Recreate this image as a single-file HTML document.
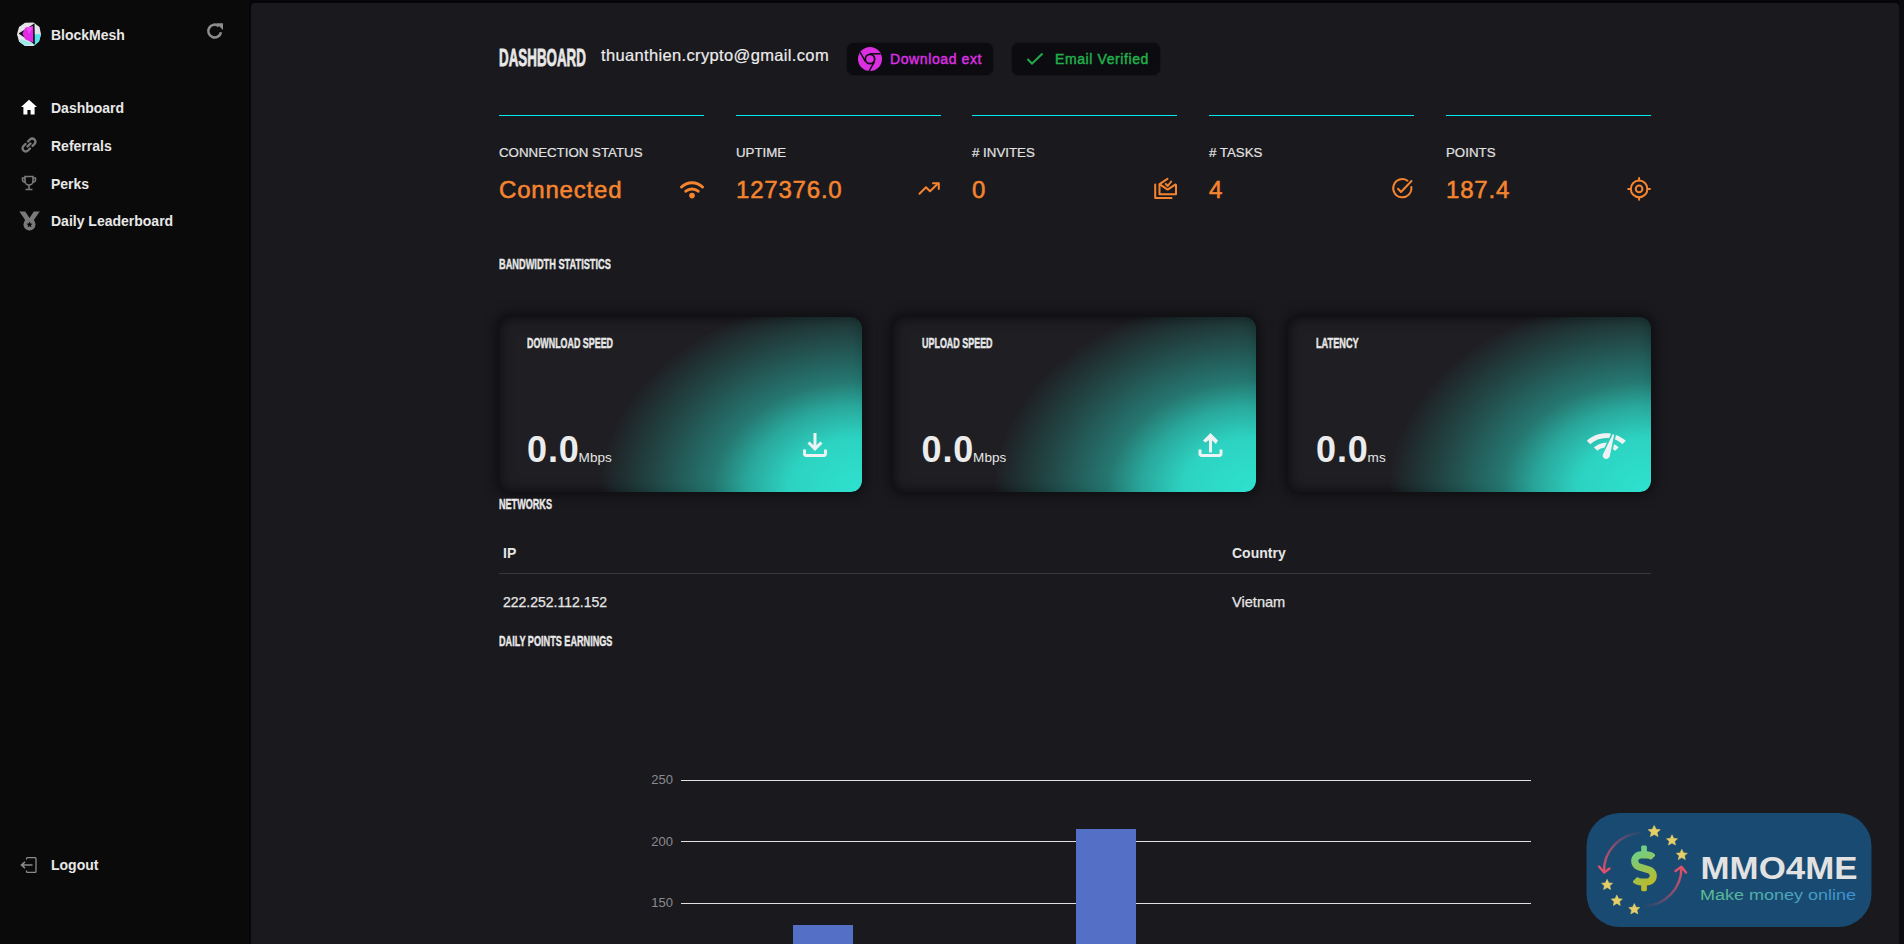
<!DOCTYPE html>
<html><head><meta charset="utf-8">
<style>
*{margin:0;padding:0;box-sizing:border-box}
html,body{width:1904px;height:944px;overflow:hidden}
body{background:#06050a;font-family:"Liberation Sans",sans-serif;position:relative;color:#e6e6e6}
.abs{position:absolute}
#side{left:0;top:0;width:249px;height:944px;background:#0a0a0a}
#main{left:251px;top:3px;width:1648px;height:960px;background:#1a191e;border-top-left-radius:4px;border-top-right-radius:4px}
#rstrip{left:1899px;top:0;width:5px;height:944px;background:#0b0a0f}
.nav{font-weight:bold;font-size:14px;color:#e8e8e8;white-space:nowrap}
.cond{font-weight:bold;white-space:nowrap;transform-origin:0 0;color:#e8e8e8;line-height:1;-webkit-text-stroke:0.45px #e8e8e8}
.cline{height:2px;background:#00e8f2;width:205px}
.lbl{font-size:13.3px;color:#e2e2e2;white-space:nowrap;-webkit-text-stroke:0.2px #e2e2e2}
.val{font-size:24px;font-weight:normal;color:#f5842f;white-space:nowrap;letter-spacing:0.8px;-webkit-text-stroke:0.55px #f5842f}
.card{width:363px;height:175px;border-radius:11px;overflow:hidden;background:#1f1f23;
 box-shadow:0 0 12px 3px rgba(0,0,0,0.5), inset 0 0 12px 2px rgba(0,0,0,0.5)}
.card::after{content:"";position:absolute;left:0;top:0;right:0;bottom:0;border-radius:11px;
 background:radial-gradient(ellipse 262px 196px at 100% 100%, rgba(46,226,207,1) 0%, rgba(46,226,207,0.92) 28%, rgba(46,226,207,0.7) 44%, rgba(46,226,207,0.45) 57%, rgba(46,226,207,0.2) 80%, rgba(46,226,207,0) 100%)}
.big{font-size:36px;font-weight:bold;color:#ececec;white-space:nowrap;letter-spacing:0.9px}
.unit{font-size:13.5px;font-weight:normal;color:#e6e6e6;letter-spacing:0.1px;margin-left:-1.2px}
</style></head><body>
<div id="side" class="abs"></div>
<div id="main" class="abs"></div>
<div id="rstrip" class="abs"></div>

<!-- sidebar -->
<svg class="abs" style="left:17px;top:22px" width="24" height="25" viewBox="0 0 24 25">
 <path d="M8 0.8 L16.5 0.6 L22.5 5 L24 12.2 L22 19.5 L16.5 24 L8 24 L2 19.5 L0 12.2 L2 5 Z" fill="#e4e4ea"/>
 <path d="M16.5 12.2 L24 12.2 L22 19.5 L16.5 24 Z" fill="#55e3ea"/>
 <path d="M4 17 L16.5 21.8 L8 24 L2 19.5 Z" fill="#9fe9ee"/>
 <path d="M1.6 11.6 L17 1.8 L17 22 Z" fill="#0c0c0c"/>
 <path d="M5.4 11.6 L8.6 5.4 L16.3 4.2 L16.3 20.6 L8.4 17.6 Z" fill="#e02ae6"/>
 <path d="M8.6 5.4 L16.3 4.2 L12.5 12 Z" fill="#f04af5"/>
 <path d="M16.9 1.8 L17.3 22.2" stroke="#0c0c0c" stroke-width="1.2"/>
</svg>
<div class="abs nav" style="left:51px;top:26.5px;">BlockMesh</div>
<svg class="abs" style="left:206px;top:22px" width="18" height="18" viewBox="0 0 18 18">
 <path d="M15 10.3 A6.4 6.4 0 1 1 12.9 4.2" fill="none" stroke="#8c8c8c" stroke-width="2.6"/>
 <path d="M10.3 1.2 L17 1.2 L17 7.9 Z" fill="#8c8c8c"/>
</svg>

<svg class="abs" style="left:21px;top:99px" width="16" height="16" viewBox="0 0 16 16">
 <path d="M8 0.8 L16 8 L13.6 8 L13.6 15.5 L9.6 15.5 L9.6 11 L6.4 11 L6.4 15.5 L2.4 15.5 L2.4 8 L0 8 Z" fill="#ffffff"/>
</svg>
<div class="abs nav" style="left:51px;top:99.5px;">Dashboard</div>
<svg class="abs" style="left:21px;top:137px" width="16" height="16" viewBox="0 0 16 16">
 <path d="M6.5 9.5 L9.5 6.5 M7 4.5 L9 2.5 A2.8 2.8 0 0 1 13.5 7 L11.5 9 M9 11.5 L7 13.5 A2.8 2.8 0 0 1 2.5 9 L4.5 7" fill="none" stroke="#7a7a7a" stroke-width="2.4" stroke-linecap="round"/>
</svg>
<div class="abs nav" style="left:51px;top:137.5px;">Referrals</div>
<svg class="abs" style="left:21px;top:175px" width="16" height="16" viewBox="0 0 16 16">
 <path d="M4 1.5 H12 V6 A4 4 0 0 1 4 6 Z M4 3 H1.5 V4.5 A2.5 2.5 0 0 0 4.3 7.2 M12 3 H14.5 V4.5 A2.5 2.5 0 0 1 11.7 7.2 M8 10 V13.8 M4.5 14.5 H11.5" fill="none" stroke="#7a7a7a" stroke-width="1.6"/>
</svg>
<div class="abs nav" style="left:51px;top:176px;">Perks</div>
<svg class="abs" style="left:19px;top:211px" width="21" height="20" viewBox="0 0 21 20">
 <path d="M0.3 0.5 H6.2 L10.5 7 L14.8 0.5 H20.7 L14.5 9.5 H6.5 Z" fill="#7a7a7a"/>
 <circle cx="10.5" cy="13.6" r="6" fill="#7a7a7a"/>
 <path d="M10.5 10.6 L11.4 12.6 L13.5 12.8 L11.9 14.2 L12.4 16.3 L10.5 15.2 L8.6 16.3 L9.1 14.2 L7.5 12.8 L9.6 12.6 Z" fill="#0a0a0a"/>
</svg>
<div class="abs nav" style="left:51px;top:213px;">Daily Leaderboard</div>

<svg class="abs" style="left:20px;top:857px" width="17" height="16" viewBox="0 0 17 16">
 <path d="M6.5 2.5 V1.8 A1.3 1.3 0 0 1 7.8 0.5 H14.7 A1.3 1.3 0 0 1 16 1.8 V14.2 A1.3 1.3 0 0 1 14.7 15.5 H7.8 A1.3 1.3 0 0 1 6.5 14.2 V13.5" fill="none" stroke="#8a8a8a" stroke-width="1.3"/>
 <path d="M12.5 8 H2 M5 4.8 L1.5 8 L5 11.2" fill="none" stroke="#8a8a8a" stroke-width="1.6"/>
</svg>
<div class="abs nav" style="left:51px;top:857px;">Logout</div>

<!-- header -->
<div class="abs cond" style="left:499px;top:46px;font-size:24px;transform:scaleX(0.557);-webkit-text-stroke:0.8px #e8e8e8">DASHBOARD</div>
<div class="abs" style="left:601px;top:47px;font-size:16.5px;line-height:1;letter-spacing:0.35px;color:#ececec;white-space:nowrap;-webkit-text-stroke:0.2px #ececec">thuanthien.crypto@gmail.com</div>
<div class="abs" style="left:847px;top:43px;width:146px;height:32px;background:#0c0b10;border-radius:7px;box-shadow:0 0 2px rgba(0,0,0,0.6)"></div>
<svg class="abs" style="left:858px;top:47px" width="24" height="24" viewBox="0 0 24 24">
 <circle cx="12" cy="12" r="12" fill="#dc2fe2"/>
 <circle cx="12" cy="12" r="5.5" fill="#0c0b10"/>
 <circle cx="12" cy="12" r="3.8" fill="#de2fe6"/>
 <path d="M12 6.8 L22.6 6.8" stroke="#0c0b10" stroke-width="1.5"/>
 <path d="M7.5 14.6 L2.2 5.4" stroke="#0c0b10" stroke-width="1.5"/>
 <path d="M16.5 14.6 L11.2 23.8" stroke="#0c0b10" stroke-width="1.5"/>
</svg>
<div class="abs" style="left:890px;top:51.5px;font-size:14px;line-height:1;font-weight:normal;color:#dc2fe2;white-space:nowrap;letter-spacing:0.6px;-webkit-text-stroke:0.45px #dc2fe2">Download ext</div>
<div class="abs" style="left:1012px;top:43px;width:148px;height:32px;background:#0c0b10;border-radius:7px;box-shadow:0 0 2px rgba(0,0,0,0.6)"></div>
<svg class="abs" style="left:1026px;top:52px" width="18" height="14" viewBox="0 0 18 14">
 <path d="M1.5 7 L6 11.6 L16.5 1.5" fill="none" stroke="#22b04b" stroke-width="2"/>
</svg>
<div class="abs" style="left:1055px;top:51.5px;font-size:14px;line-height:1;font-weight:normal;color:#22b04b;white-space:nowrap;letter-spacing:0.6px;-webkit-text-stroke:0.45px #22b04b">Email Verified</div>

<!-- stats -->
<div class="abs cline" style="left:499px;top:115px;height:1px"></div>
<div class="abs cline" style="left:736px;top:115px;height:1px"></div>
<div class="abs cline" style="left:972px;top:115px;height:1px"></div>
<div class="abs cline" style="left:1209px;top:115px;height:1px"></div>
<div class="abs cline" style="left:1446px;top:115px;height:1px"></div>

<div class="abs lbl" style="left:499px;top:145.7px;line-height:1">CONNECTION STATUS</div>
<div class="abs lbl" style="left:736px;top:145.7px;line-height:1">UPTIME</div>
<div class="abs lbl" style="left:972px;top:145.7px;line-height:1"># INVITES</div>
<div class="abs lbl" style="left:1209px;top:145.7px;line-height:1"># TASKS</div>
<div class="abs lbl" style="left:1446px;top:145.7px;line-height:1">POINTS</div>

<div class="abs val" style="left:499px;top:177.7px;line-height:1">Connected</div>
<div class="abs val" style="left:736px;top:177.7px;line-height:1">127376.0</div>
<div class="abs val" style="left:972px;top:177.7px;line-height:1">0</div>
<div class="abs val" style="left:1209px;top:177.7px;line-height:1">4</div>
<div class="abs val" style="left:1446px;top:177.7px;line-height:1">187.4</div>

<svg class="abs" style="left:678px;top:178px" width="28" height="22" viewBox="678 178 28 22">
 <path d="M681.5 187 A15 15 0 0 1 702.5 187" fill="none" stroke="#f5842f" stroke-width="3" stroke-linecap="round"/>
 <path d="M685.8 191.2 A9.7 9.7 0 0 1 698.2 191.2" fill="none" stroke="#f5842f" stroke-width="3" stroke-linecap="round"/>
 <circle cx="692" cy="195.6" r="2.8" fill="#f5842f"/>
</svg>
<svg class="abs" style="left:915px;top:179px" width="28" height="20" viewBox="915 179 28 20">
 <path d="M919.5 193.8 L926 187.3 L930 191.3 L938 183.5" fill="none" stroke="#f5842f" stroke-width="2" stroke-linecap="round" stroke-linejoin="round"/>
 <path d="M933 183.3 L938.8 183.3 L938.8 189" fill="none" stroke="#f5842f" stroke-width="2" stroke-linecap="round" stroke-linejoin="round"/>
</svg>
<svg class="abs" style="left:1150px;top:174px" width="32" height="28" viewBox="1150 174 32 28">
 <path d="M1155.2 184.5 V197.9 H1171.5" fill="none" stroke="#f5842f" stroke-width="2" stroke-linecap="round" stroke-linejoin="round"/>
 <path d="M1159.5 184 V194.2 H1176 V184.2" fill="none" stroke="#f5842f" stroke-width="2" stroke-linejoin="round"/>
 <path d="M1159.5 184.2 L1167.6 189.6 L1176 184.2" fill="none" stroke="#f5842f" stroke-width="2" stroke-linejoin="round"/>
 <path d="M1159.5 184.2 L1167.5 178.8" fill="none" stroke="#f5842f" stroke-width="2" stroke-linecap="round"/>
 <path d="M1165.8 184 L1167.7 186 L1171.2 181.5" fill="none" stroke="#f5842f" stroke-width="2" stroke-linecap="round" stroke-linejoin="round"/>
</svg>
<svg class="abs" style="left:1388px;top:174px" width="30" height="30" viewBox="1388 174 30 30">
 <path d="M1407.5 180.8 A9.1 9.1 0 1 0 1411.3 187" fill="none" stroke="#f5842f" stroke-width="2" stroke-linecap="round"/>
 <path d="M1398 188.8 L1401 192 L1411.5 181" fill="none" stroke="#f5842f" stroke-width="2" stroke-linecap="round" stroke-linejoin="round"/>
</svg>
<svg class="abs" style="left:1624px;top:174px" width="30" height="30" viewBox="1624 174 30 30">
 <circle cx="1639.1" cy="188.9" r="8.3" fill="none" stroke="#f5842f" stroke-width="2"/>
 <circle cx="1639.1" cy="188.9" r="3.3" fill="none" stroke="#f5842f" stroke-width="2"/>
 <path d="M1639.1 178 V180.6 M1639.1 197.2 V199.8 M1628.2 188.9 H1630.8 M1647.4 188.9 H1650" fill="none" stroke="#f5842f" stroke-width="2" stroke-linecap="round"/>
</svg>

<!-- cards -->
<div class="abs cond" style="left:499px;top:255.5px;font-size:15.5px;line-height:1;transform:scaleX(0.595)">BANDWIDTH STATISTICS</div>

<div class="abs card" style="left:499px;top:317px"></div>
<div class="abs card" style="left:893px;top:317px"></div>
<div class="abs card" style="left:1288px;top:317px"></div>

<div class="abs cond" style="left:527px;top:334.6px;font-size:15.5px;line-height:1;transform:scaleX(0.574)">DOWNLOAD SPEED</div>
<div class="abs cond" style="left:921.5px;top:334.6px;font-size:15.5px;line-height:1;transform:scaleX(0.577)">UPLOAD SPEED</div>
<div class="abs cond" style="left:1316px;top:334.6px;font-size:15.5px;line-height:1;transform:scaleX(0.592)">LATENCY</div>

<div class="abs big" style="left:527px;top:431.5px;line-height:1">0.0<span class="unit">Mbps</span></div>
<div class="abs big" style="left:921.5px;top:431.5px;line-height:1">0.0<span class="unit">Mbps</span></div>
<div class="abs big" style="left:1316px;top:431.5px;line-height:1">0.0<span class="unit">ms</span></div>

<svg class="abs" style="left:797px;top:427px" width="36" height="36" viewBox="0 0 24 24"><path fill="#eef2f2" d="M18 15v3H6v-3H4v3c0 1.1.9 2 2 2h12c1.1 0 2-.9 2-2v-3h-2zm-1-4-1.41-1.41L13 12.17V4h-2v8.17L8.41 9.59 7 11l5 5 5-5z"/></svg>
<svg class="abs" style="left:1191.5px;top:426.5px" width="37" height="36" viewBox="0 0 24 24"><path fill="#eef2f2" d="M18 15v3H6v-3H4v3c0 1.1.9 2 2 2h12c1.1 0 2-.9 2-2v-3h-2zM7 9l1.41 1.41L11 8.83V17h2V8.83l2.59 2.58L17 9l-5-5-5 5z"/></svg>
<svg class="abs" style="left:1584.6px;top:426px" width="42.6" height="39.6" viewBox="0 0 24 24" preserveAspectRatio="none"><path fill="#eef2f2" d="M15.9 5c-.17 0-.32.09-.41.23l-.07.15-5.18 11.65c-.16.29-.26.61-.26.96 0 1.11.9 2.01 2.01 2.01.96 0 1.770-.68 1.960-1.59l.01-.03L16.4 5.5c0-.28-.22-.5-.5-.5zM1 9l2 2c2.88-2.88 6.79-4.08 10.53-3.62l1.19-2.68C9.890 3.840 4.740 5.270 1 9zm20 2 2-2c-1.64-1.64-3.55-2.82-5.59-3.570l-.53 2.82c1.5.62 2.9 1.53 4.12 2.75zm-4 4 2-2c-.8-.8-1.7-1.42-2.66-1.89l-.55 2.92c.42.27.83.59 1.21.97zM5 13l2 2c1.13-1.13 2.56-1.79 4.03-2l1.28-2.88c-2.63-.08-5.3.87-7.31 2.88z"/></svg>

<div class="abs cond" style="left:499px;top:496.4px;font-size:15.5px;line-height:1;transform:scaleX(0.586)">NETWORKS</div>
<div class="abs" style="left:503px;top:545.9px;font-size:14px;line-height:1;font-weight:bold;color:#e6e6e6">IP</div>
<div class="abs" style="left:1232px;top:545.9px;font-size:14px;line-height:1;font-weight:bold;color:#e6e6e6">Country</div>
<div class="abs" style="left:499px;top:573px;width:1152px;height:1px;background:#38373d"></div>
<div class="abs" style="left:503px;top:594.8px;font-size:14px;line-height:1;color:#e6e6e6;white-space:nowrap;-webkit-text-stroke:0.25px #e6e6e6">222.252.112.152</div>
<div class="abs" style="left:1232px;top:594.8px;font-size:14.6px;line-height:1;color:#e6e6e6;white-space:nowrap;-webkit-text-stroke:0.25px #e6e6e6">Vietnam</div>

<div class="abs cond" style="left:499px;top:633.4px;font-size:15.5px;line-height:1;transform:scaleX(0.588)">DAILY POINTS EARNINGS</div>

<!-- chart -->
<div class="abs" style="left:681px;top:780px;width:850px;height:1px;background:#e0e0e0"></div>
<div class="abs" style="left:681px;top:841px;width:850px;height:1px;background:#e0e0e0"></div>
<div class="abs" style="left:681px;top:903px;width:850px;height:1px;background:#e0e0e0"></div>
<div class="abs" style="left:793px;top:925px;width:60px;height:30px;background:#5470c6"></div>
<div class="abs" style="left:1076px;top:829px;width:60px;height:130px;background:#5470c6"></div>
<div class="abs" style="left:640px;top:773px;width:33px;font-size:13px;line-height:1;color:#8b8b8f;text-align:right">250</div>
<div class="abs" style="left:640px;top:834.5px;width:33px;font-size:13px;line-height:1;color:#8b8b8f;text-align:right">200</div>
<div class="abs" style="left:640px;top:896px;width:33px;font-size:13px;line-height:1;color:#8b8b8f;text-align:right">150</div>

<!-- wm -->
<svg class="abs" style="left:1586px;top:813px" width="286" height="115" viewBox="0 0 286 115">
 <defs>
  <linearGradient id="dg" x1="0" y1="0" x2="288" y2="512" gradientUnits="userSpaceOnUse">
   <stop offset="0" stop-color="#5fd39a"/><stop offset="1" stop-color="#cdb514"/>
  </linearGradient>
  <linearGradient id="ag1" x1="55" y1="20" x2="18" y2="60" gradientUnits="userSpaceOnUse">
   <stop offset="0" stop-color="#e0506a" stop-opacity="0.05"/><stop offset="1" stop-color="#e0506a"/>
  </linearGradient>
  <linearGradient id="ag2" x1="59" y1="93" x2="96" y2="55" gradientUnits="userSpaceOnUse">
   <stop offset="0" stop-color="#e0506a" stop-opacity="0.05"/><stop offset="1" stop-color="#e0506a"/>
  </linearGradient>
  <linearGradient id="tg" x1="0" y1="0" x2="1" y2="0">
   <stop offset="0" stop-color="#5fbf8f"/><stop offset="1" stop-color="#3c8fd6"/>
  </linearGradient>
  <path id="star" d="M0 -6.2 L1.9 -2.3 L6 -1.9 L2.9 0.9 L3.8 5 L0 2.8 L-3.8 5 L-2.9 0.9 L-6 -1.9 L-1.9 -2.3 Z" stroke-linejoin="round"/>
 </defs>
 <rect x="0.5" y="0" width="285" height="114" rx="33" fill="#194a71"/>
 <path d="M55 20 A38 38 0 0 0 18 59" fill="none" stroke="url(#ag1)" stroke-width="2.4" stroke-linecap="round"/>
 <path d="M13 53.5 L18.2 59.5 L23.5 55.5" fill="none" stroke="#e0506a" stroke-width="2.4" stroke-linecap="round" stroke-linejoin="round"/>
 <path d="M59 93 A38 38 0 0 0 95.4 54.5" fill="none" stroke="url(#ag2)" stroke-width="2.4" stroke-linecap="round"/>
 <path d="M89.5 58 L95.4 53.8 L100 59.6" fill="none" stroke="#e0506a" stroke-width="2.4" stroke-linecap="round" stroke-linejoin="round"/>
 <g fill="#e6cf66" stroke="#e6cf66" stroke-width="0.6">
  <use href="#star" transform="translate(68.2 18.6) scale(1.0)"/>
  <use href="#star" transform="translate(86 27.5) scale(0.92)"/>
  <use href="#star" transform="translate(95.8 42) scale(0.92)"/>
  <use href="#star" transform="translate(21.1 72) scale(0.92)"/>
  <use href="#star" transform="translate(30.8 87.8) scale(0.92)"/>
  <use href="#star" transform="translate(48.3 96.3) scale(0.92)"/>
 </g>
 <g transform="translate(45.2 32.6) scale(0.0891)"><path fill="url(#dg)" d="M209.2 233.4l-108-31.6C88.7 198.2 80 186.5 80 173.5c0-16.3 13.2-29.5 29.5-29.5h66.3c12.200 0 24.200 3.700 34.200 10.500 6.100 4.100 14.300 3.100 19.500-2l34.800-34c7.100-6.900 6.100-18.400-1.800-24.500C238 74.800 207.400 64.100 176 64V16c0-8.800-7.200-16-16-16h-32c-8.800 0-16 7.200-16 16v48h-2.500C45.800 64-5.400 118.700.5 183.600c4.200 46.100 39.400 83.600 83.800 96.600l102.500 30c12.500 3.700 21.200 15.300 21.200 28.300 0 16.300-13.200 29.500-29.500 29.500h-66.300C100 368 88 364.300 78 357.500c-6.100-4.100-14.300-3.100-19.500 2l-34.800 34c-7.100 6.900-6.100 18.400 1.800 24.500 24.500 19.200 55.100 29.900 86.500 30v48c0 8.800 7.200 16 16 16h32c8.800 0 16-7.200 16-16v-48.200c46.600-.9 90.300-28.600 105.700-72.700 21.500-61.600-14.600-124.800-72.500-141.700z"/></g>
 <text x="0" y="0" font-family="Liberation Sans" font-weight="bold" font-size="30.7" fill="#e2e2e2" transform="translate(114.5 65.5) scale(1.137 1)">MMO4ME</text>
 <text x="0" y="0" font-family="Liberation Sans" font-size="15" fill="url(#tg)" transform="translate(114 86.6) scale(1.2 1)">Make money online</text>
</svg>

</body></html>
